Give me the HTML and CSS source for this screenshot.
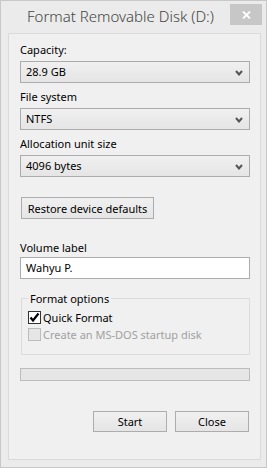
FILE: index.html
```html
<!DOCTYPE html>
<html>
<head>
<meta charset="utf-8">
<link rel="stylesheet" href="styles.css">
</head>
<body>
<div class="window">
  <div class="titlebar">
    <div class="title">Format Removable Disk (D:)</div>
    <div class="close-btn">
      <svg width="9" height="8" viewBox="0 0 9 8"><path d="M1 0.5 L8 7.5 M8 0.5 L1 7.5" stroke="#fff" stroke-width="1.8" fill="none"/></svg>
    </div>
  </div>
  <div class="panel">
    <div class="label first">Capacity:</div>
    <div class="select"><span>28.9 GB</span><svg class="chev" width="8" height="6" viewBox="0 0 8 6"><path d="M1 1 L4 4.5 L7 1" stroke="#555" stroke-width="2" fill="none"/></svg></div>
    <div class="label">File system</div>
    <div class="select"><span>NTFS</span><svg class="chev" width="8" height="6" viewBox="0 0 8 6"><path d="M1 1 L4 4.5 L7 1" stroke="#555" stroke-width="2" fill="none"/></svg></div>
    <div class="label">Allocation unit size</div>
    <div class="select"><span>4096 bytes</span><svg class="chev" width="8" height="6" viewBox="0 0 8 6"><path d="M1 1 L4 4.5 L7 1" stroke="#555" stroke-width="2" fill="none"/></svg></div>
    <div class="button restore">Restore device defaults</div>
    <div class="label vol">Volume label</div>
    <div class="textbox">Wahyu P.</div>
    <fieldset class="group">
      <legend>Format options</legend>
      <div class="check-row">
        <span class="checkbox checked"><svg width="11" height="11" viewBox="0 0 11 11"><path d="M1.5 5.5 L4 8.5 L9.5 1.5" stroke="#000" stroke-width="2.2" fill="none"/></svg></span>
        <span>Quick Format</span>
      </div>
      <div class="check-row disabled">
        <span class="checkbox"></span>
        <span>Create an MS-DOS startup disk</span>
      </div>
    </fieldset>
    <div class="progress"></div>
    <div class="actions">
      <div class="button action">Start</div>
      <div class="button action">Close</div>
    </div>
  </div>
</div>
</body>
</html>
```

FILE: styles.css
```css
* { box-sizing: border-box; }
html, body { margin: 0; padding: 0; background: #fff; }
body {
  font-family: "Noto Sans", "Open Sans", sans-serif;
  font-size: 11px;
  color: #000;
}
.window {
  width: 267px;
  height: 468px;
  background: #ebebeb;
  border: 1px solid #c8c8c8;
  display: flex;
  flex-direction: column;
}
.titlebar {
  height: 32px;
  display: flex;
  align-items: flex-start;
  position: relative;
}
.title {
  font-size: 15px;
  color: #444;
  padding-left: 26px;
  padding-top: 5px;
  line-height: 20px;
  font-weight: 300;
}
.close-btn {
  position: absolute;
  left: 229px;
  top: 3px;
  width: 32px;
  height: 21px;
  background: #c7c7c7;
  display: flex;
  align-items: center;
  justify-content: center;
}
.panel {
  margin: 0 5px 7px 7px;
  flex: 1;
  background: #f0f0f0;
  border: 1px solid #dadada;
  padding: 8px 10px 0 11px;
  display: flex;
  flex-direction: column;
}
.label {
  line-height: 15px;
  height: 15px;
  margin-top: 6px;
  margin-bottom: 4px;
  white-space: nowrap;
}
.label.first { margin-top: 0; }
.select {
  height: 22px;
  border: 1px solid #acacac;
  background: linear-gradient(#f0f0f0, #e5e5e5);
  display: flex;
  align-items: center;
  justify-content: space-between;
  padding: 0 6px 0 5px;
  line-height: 20px;
}
.chev { margin-top: 1px; }
.button {
  height: 22px;
  border: 1px solid #adadad;
  background: linear-gradient(#f0f0f0, #e5e5e5);
  display: flex;
  align-items: center;
  justify-content: center;
  white-space: nowrap;
}
.restore {
  margin-top: 20px;
  margin-left: 1px;
  width: 133px;
}
.label.vol { margin-top: 21px; margin-bottom: 2px; }
.textbox {
  height: 22px;
  border: 1px solid #acacac;
  background: #fff;
  padding: 0 5px;
  line-height: 20px;
}
.group {
  margin: 12px 0 0 1px;
  width: 229px;
  border: 1px solid #dcdcdc;
  padding: 3px 6px 8px 6px;
  height: 64px;
}
.group legend {
  padding: 0 2px;
  margin-left: 0;
  line-height: 15px;
}
.check-row {
  display: flex;
  align-items: center;
  gap: 2px;
  height: 16px;
  margin-bottom: 1px;
  white-space: nowrap;
}
.checkbox {
  width: 13px;
  height: 13px;
  border: 1px solid #333;
  background: #fff;
  display: inline-flex;
  align-items: center;
  justify-content: center;
}
.check-row.disabled { color: #a0a0a0; }
.check-row.disabled .checkbox {
  border-color: #bcbcbc;
  background: #e6e6e6;
}
.progress {
  margin-top: 13px;
  height: 13px;
  border: 1px solid #bcbcbc;
  background: #e6e6e6;
}
.actions {
  margin-top: 30px;
  display: flex;
  justify-content: flex-end;
  gap: 8px;
  padding-right: 1px;
}
.action {
  width: 74px;
  height: 21px;
}
```
